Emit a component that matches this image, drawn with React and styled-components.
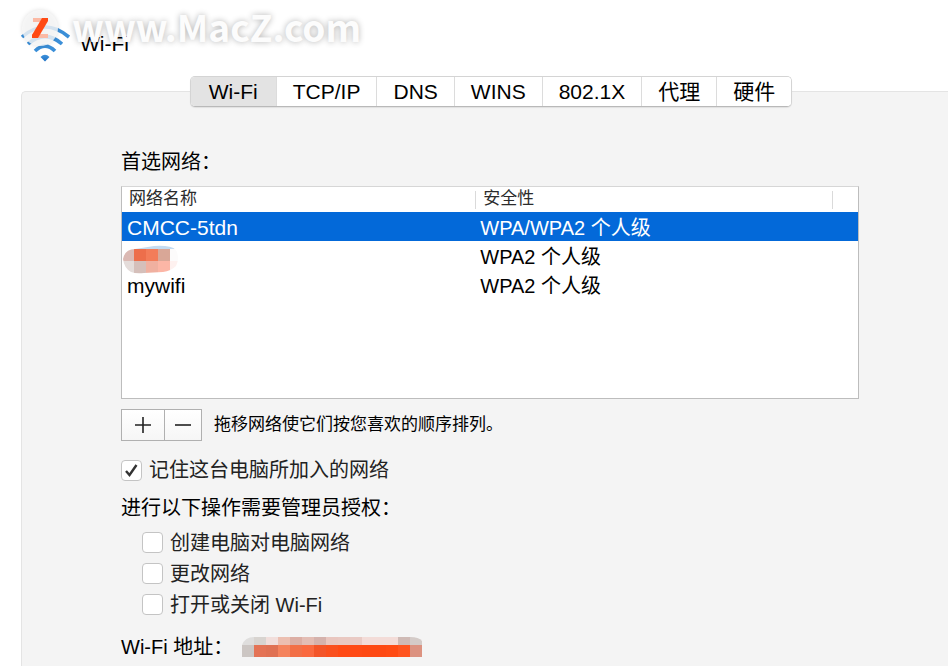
import React, { useState } from "react";
import styled, { createGlobalStyle } from "styled-components";

const tabs = ["Wi-Fi", "TCP/IP", "DNS", "WINS", "802.1X", "代理", "硬件"];

const networks = [
  { id: 1, name: "CMCC-5tdn", security: "WPA/WPA2 个人级" },
  { id: 2, name: null, security: "WPA2 个人级" },
  { id: 3, name: "mywifi", security: "WPA2 个人级" },
];

const permissions = [
  { id: "create", label: "创建电脑对电脑网络" },
  { id: "change", label: "更改网络" },
  { id: "power", label: "打开或关闭 Wi-Fi" },
];

const addressTop = [
  "#dfdedd", "#d8d4d0", "#f1dedb", "#ecbfb1", "#dcaea4", "#e3bdb4", "#d5b2ac",
  "#e9c6bf", "#e9c8c1", "#e9cac4", "#f3dcd8", "#f3dcd8", "#f3dcd8", "#cfbab5",
  "#d4cbc8",
];
const addressBottom = [
  "#ccc6c3", "#e47355", "#e07153", "#f5835d", "#f26f46", "#fa693f", "#f35529",
  "#fa501e", "#ff4a15", "#ff4a15", "#fe4913", "#fe4913", "#ff4b14", "#ff541f",
  "#dc9280",
];

function WifiIcon() {
  return (
    <svg width="50" height="42" viewBox="0 0 50 42" aria-hidden="true">
      <defs>
        <linearGradient id="blue" x1="0" y1="0" x2="0" y2="1">
          <stop offset="0" stopColor="#3f93dc" />
          <stop offset="1" stopColor="#1c70c4" />
        </linearGradient>
      </defs>
      <g fill="none" stroke="#3b8fd8" strokeWidth="3.6">
        <path d="M2 17Q25 -3 49 17" />
        <path d="M8 24Q25 9 42 24" />
        <path d="M15 31Q25 21 35 31" />
      </g>
      <path d="M20.500 37Q25 32.500 29.500 37L25 41.500Z" fill="url(#blue)" />
    </svg>
  );
}

function HiddenName() {
  return (
    <Blob width="56" height="28" viewBox="0 0 56 28" role="img">
      <defs>
        <clipPath id="blob">
          <path d="M0 17Q2 7 12 7L31 4Q48 3 53 8Q57 16 53 24Q48 29 40 30L21 31Q13 32 8 30Q1 26 0 17Z" />
        </clipPath>
      </defs>
      <g clipPath="url(#blob)" shapeRendering="crispEdges">
        <rect x="11" y="3" width="41" height="4" fill="#c3dbf1" />
        <rect x="0" y="7" width="11" height="12" fill="#dbb9b3" />
        <rect x="11" y="7" width="12" height="12" fill="#ed6e4b" />
        <rect x="23" y="7" width="12" height="12" fill="#f37c59" />
        <rect x="35" y="7" width="12" height="12" fill="#d9a797" />
        <rect x="47" y="7" width="9" height="12" fill="#fcfbfb" />
        <rect x="0" y="19" width="11" height="13" fill="#e4dcda" />
        <rect x="11" y="19" width="12" height="13" fill="#d5bfba" />
        <rect x="23" y="19" width="12" height="13" fill="#f0b0a0" />
        <rect x="35" y="19" width="12" height="13" fill="#fcb6a6" />
        <rect x="47" y="19" width="9" height="13" fill="#fef1ef" />
      </g>
    </Blob>
  );
}

function HiddenAddress() {
  return (
    <svg width="180" height="20" viewBox="0 0 180 20" role="img">
      <defs>
        <clipPath id="strip">
          <path d="M0 20V8Q3 0 12 0H168Q177 0 180 4V20Z" />
        </clipPath>
      </defs>
      <g clipPath="url(#strip)" shapeRendering="crispEdges">
        {addressTop.map((color, i) => (
          <rect key={i} x={i * 12} y="0" width="12" height="8" fill={color} />
        ))}
        {addressBottom.map((color, i) => (
          <rect key={i} x={i * 12} y="8" width="12" height="12" fill={color} />
        ))}
      </g>
    </svg>
  );
}

function Check({ label, checked, onChange }) {
  return (
    <CheckLabel>
      <CheckBox>
        <input type="checkbox" checked={checked} onChange={onChange} />
        {checked && (
          <svg width="21" height="21" viewBox="0 0 21 21" aria-hidden="true">
            <path
              d="M5 11L8.500 15L15.500 5"
              fill="none"
              stroke="#333"
              strokeWidth="2.4"
            />
          </svg>
        )}
      </CheckBox>
      {label}
    </CheckLabel>
  );
}

function App() {
  const [tab, setTab] = useState("Wi-Fi");
  const [selected, setSelected] = useState(1);
  const [checks, setChecks] = useState({ remember: true });

  const toggle = (id) => setChecks({ ...checks, [id]: !checks[id] });

  return (
    <Page>
      <GlobalStyle />
      <Header>
        <WifiIcon />
        <h1>Wi-Fi</h1>
      </Header>
      <Watermark>
        <svg width="44" height="44" viewBox="0 0 44 44" aria-hidden="true">
          <circle cx="22" cy="22" r="18" fill="#f8f8f8" fillOpacity="0.82" />
          <path d="M15 12H29V16H15ZM14 28H30V32H14Z" fill="#fbb9a4" />
          <path d="M24 12H30V15L20 32H14V29Z" fill="#ff4a14" />
        </svg>
        <span>www.MacZ.com</span>
      </Watermark>
      <TabBar role="tablist">
        {tabs.map((name) => (
          <Tab
            key={name}
            type="button"
            role="tab"
            aria-selected={name === tab}
            $active={name === tab}
            onClick={() => setTab(name)}
          >
            {name}
          </Tab>
        ))}
      </TabBar>
      <Panel>
        <Title>首选网络：</Title>
        <ListBox>
          <Table>
            <colgroup>
              <col className="name" />
              <col className="security" />
              <col />
            </colgroup>
            <thead>
              <tr>
                <th><span>网络名称</span></th>
                <th><span>安全性</span></th>
                <th><span /></th>
              </tr>
            </thead>
            <tbody>
              {networks.map((item) => (
                <Row
                  key={item.id}
                  $selected={item.id === selected}
                  onClick={() => setSelected(item.id)}
                >
                  {item.name ? (
                    <td className="name">{item.name}</td>
                  ) : (
                    <td className="hidden_name"><HiddenName /></td>
                  )}
                  <td>{item.security}</td>
                  <td />
                </Row>
              ))}
            </tbody>
          </Table>
        </ListBox>
        <Tools>
          <ToolGroup>
            <ToolButton type="button" aria-label="添加" $width={42}>
              <svg width="18" height="18" viewBox="0 0 18 18">
                <path d="M9 1V17M1 9H17" stroke="#222" strokeWidth="1.6" />
              </svg>
            </ToolButton>
            <ToolButton type="button" aria-label="移除" $width={37}>
              <svg width="18" height="18" viewBox="0 0 18 18">
                <path d="M1 9H17" stroke="#222" strokeWidth="1.6" />
              </svg>
            </ToolButton>
          </ToolGroup>
          <Hint>拖移网络使它们按您喜欢的顺序排列。</Hint>
        </Tools>
        <Check
          label="记住这台电脑所加入的网络"
          checked={!!checks.remember}
          onChange={() => toggle("remember")}
        />
        <Permissions>
          <legend>进行以下操作需要管理员授权：</legend>
          {permissions.map((item) => (
            <Check
              key={item.id}
              label={item.label}
              checked={!!checks[item.id]}
              onChange={() => toggle(item.id)}
            />
          ))}
        </Permissions>
        <Address>
          <span>Wi-Fi 地址：</span>
          <HiddenAddress />
        </Address>
      </Panel>
    </Page>
  );
}

const GlobalStyle = createGlobalStyle`
  * {
    box-sizing: border-box;
  }
  body {
    margin: 0;
    background: #fff;
    color: #000;
    font-family: "Liberation Sans", "Noto Sans CJK SC", sans-serif;
    font-size: 20px;
    line-height: 26px;
  }
  button,
  input {
    font: inherit;
    color: inherit;
    margin: 0;
  }
`;

const Page = styled.div`
  position: relative;
  display: flex;
  flex-direction: column;
  min-height: 100vh;
`;

const Header = styled.header`
  display: flex;
  align-items: flex-end;
  gap: 10px;
  height: 76px;
  padding: 0 20px 14px;
  h1 {
    margin: 0 0 5px;
    font-size: 21px;
    font-weight: normal;
  }
`;

const Watermark = styled.div`
  position: absolute;
  top: 6px;
  left: 18px;
  display: flex;
  align-items: flex-start;
  gap: 10px;
  color: #fcfcfc;
  font-family: "Noto Sans CJK SC", sans-serif;
  font-size: 37px;
  font-weight: bold;
  line-height: 40px;
  text-shadow: 0 0 6px rgba(0, 0, 0, 0.3);
  pointer-events: none;
  svg {
    filter: drop-shadow(0 0 2px rgba(0, 0, 0, 0.15));
  }
`;

const TabBar = styled.div`
  position: relative;
  display: flex;
  align-self: center;
  margin-left: 34px;
  border: 1px solid #d4d4d4;
  border-bottom-color: #b9b9b9;
  border-radius: 5px;
  background: #fff;
  overflow: hidden;
  box-shadow: 0 1px 1px rgba(0, 0, 0, 0.08);
`;

const Tab = styled.button`
  height: 29px;
  padding: 0 ${(props) => (props.$active ? 18 : 16)}px;
  border: none;
  background: ${(props) => (props.$active ? "#e3e3e3" : "#fff")};
  font-size: 21px;
  line-height: 29px;
  cursor: pointer;
  & + & {
    border-left: 1px solid #dcdcdc;
  }
`;

const Panel = styled.main`
  flex: 1;
  display: flex;
  flex-direction: column;
  margin: -16px 0 0 21px;
  padding: 57px 89px 6px 99px;
  border: 1px solid #e4e4e4;
  border-width: 1px 0 0 1px;
  border-top-left-radius: 5px;
  background: #f4f4f4;
`;

const Title = styled.h2`
  margin: 0 0 11px;
  font-size: 20px;
  font-weight: normal;
`;

const ListBox = styled.div`
  min-height: 213px;
  border: 1px solid #bdbdbd;
  border-top-color: #d6d6d6;
  background: #fff;
`;

const Table = styled.table`
  width: 100%;
  table-layout: fixed;
  border-collapse: collapse;
  col.name {
    width: 48%;
  }
  col.security {
    width: 48.5%;
  }
  th {
    height: 25px;
    padding: 0;
    font-size: 17px;
    font-weight: normal;
    text-align: left;
    color: #2c2c2c;
  }
  th span {
    display: block;
    height: 18px;
    padding-left: 7px;
    line-height: 16px;
  }
  th + th span {
    border-left: 1px solid #dadada;
  }
  td {
    height: 29px;
    padding: 3px 0 0 5px;
    line-height: 26px;
  }
  td.name {
    padding-top: 2px;
    font-size: 21px;
  }
  td.hidden_name {
    padding: 0 1px;
  }
`;

const Row = styled.tr`
  cursor: default;
  color: ${(props) => (props.$selected ? "#fff" : "#000")};
  background: ${(props) => (props.$selected ? "#0369d9" : "transparent")};
`;

const Blob = styled.svg`
  display: block;
  overflow: visible;
`;

const Tools = styled.div`
  display: flex;
  align-items: center;
  gap: 12px;
  margin: 10px 0 16px;
`;

const ToolGroup = styled.div`
  display: flex;
  border: 1px solid #b0b0b0;
`;

const ToolButton = styled.button`
  display: flex;
  align-items: center;
  justify-content: center;
  width: ${(props) => props.$width}px;
  height: 30px;
  padding: 0;
  border: none;
  background: linear-gradient(#fff, #f6f6f6);
  cursor: pointer;
  & + & {
    border-left: 1px solid #b0b0b0;
  }
`;

const Hint = styled.p`
  margin: 0;
  font-size: 17px;
`;

const CheckLabel = styled.label`
  display: flex;
  align-items: center;
  align-self: flex-start;
  gap: 7px;
  color: #222;
`;

const CheckBox = styled.span`
  display: grid;
  input {
    grid-area: 1 / 1;
    appearance: none;
    width: 21px;
    height: 21px;
    border: 1px solid #c4c4c4;
    border-radius: 4px;
    background: #fff;
  }
  svg {
    grid-area: 1 / 1;
    pointer-events: none;
  }
`;

const Permissions = styled.fieldset`
  min-width: 0;
  margin: 12px 0 14px;
  padding: 0;
  border: none;
  legend {
    margin-bottom: 6px;
    padding: 0;
  }
  ${CheckLabel} {
    height: 31px;
    padding-left: 21px;
  }
`;

const Address = styled.div`
  display: flex;
  align-items: center;
  gap: 9px;
`;

export default App;
